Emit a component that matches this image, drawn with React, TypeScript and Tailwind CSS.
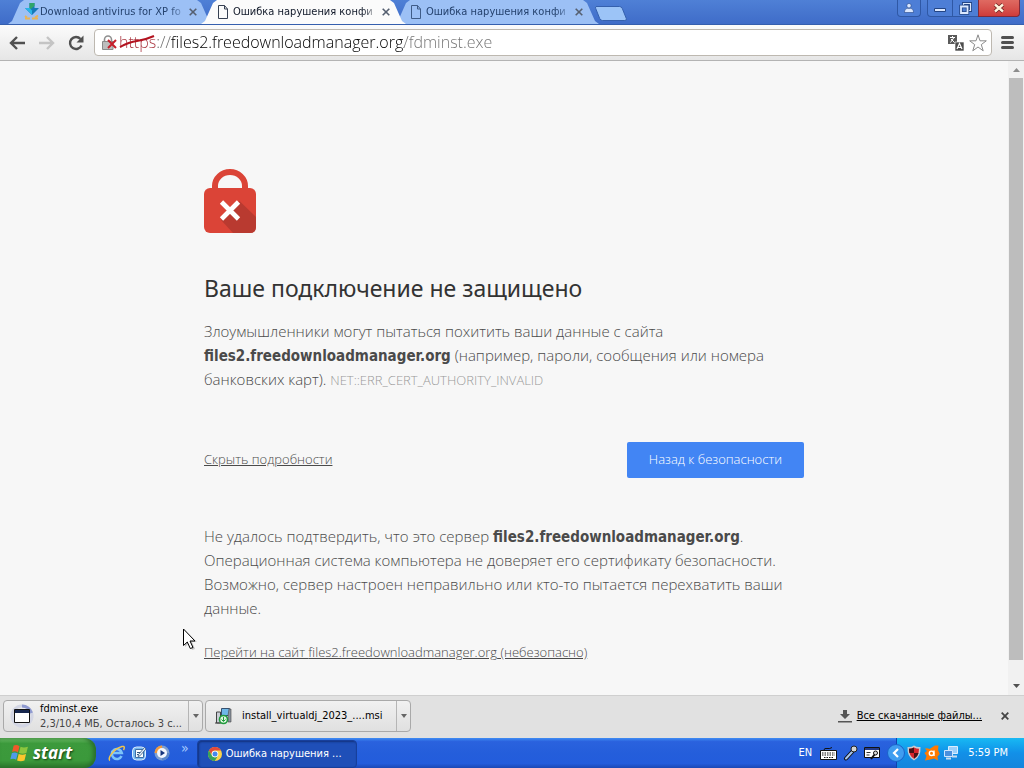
import React, { useState } from "react";
import clsx from "clsx";

const TABS = [
  { id: 1, title: "Download antivirus for XP fo", icon: "download" },
  { id: 2, title: "Ошибка нарушения конфи", icon: "page" },
  { id: 3, title: "Ошибка нарушения конфи", icon: "page" },
];

const HOST = "files2.freedownloadmanager.org";

const PageIcon = () => (
  <svg width="12" height="14" viewBox="0 0 12 14" fill="none" stroke="currentColor">
    <path d="M1.5 .5h6l3 3.5v9.5h-9z" />
    <path d="M7.5 .5v3.5h3" />
  </svg>
);

const DownloadFavicon = () => (
  <svg width="16" height="18" viewBox="0 0 16 18">
    <path d="M5.500 0h5v5H15L8 12 1 5h4.500z" fill="#1579b8" />
    <path d="M5.500 0h5v3l-5 4z" fill="#2fa56a" />
    <path d="M1 5h4.500L8 7.500V12z" fill="#28b4e8" />
    <path d="M1 15.500h5M8 15.500h6M1 13l2 1.500M14 12.500l-3 2" stroke="#e8b458" strokeWidth="1.800" />
  </svg>
);

const Cross = ({ size = 8, width = 1.6 }: { size?: number; width?: number }) => (
  <svg width={size} height={size} viewBox="0 0 8 8" stroke="currentColor" strokeWidth={width}>
    <path d="M.7 .7l6.600 6.600M7.300 .7l-6.600 6.600" />
  </svg>
);

interface TabProps {
  title: string;
  icon: string;
  active: boolean;
  onSelect: () => void;
}

const Tab = ({ title, icon, active, onSelect }: TabProps) => (
  <div
    className={clsx(
      "-ml-3 flex h-6 w-[205px] min-w-0 items-center pr-3.5 pl-4 [clip-path:polygon(0_100%,4px_88%,12px_12%,16px_0,calc(100%-16px)_0,calc(100%-12px)_12%,calc(100%-4px)_88%,100%_100%)]",
      active ? "relative z-10 bg-[#fbfbfb] text-gray-900" : "bg-[#9cc0f5] text-[#25426e]"
    )}
  >
    <button type="button" onClick={onSelect} className="flex min-w-0 flex-1 items-center text-left">
      <span className={clsx("flex w-4 shrink-0", active ? "text-gray-700" : "text-[#3f5c88]")}>
        {icon === "page" ? <PageIcon /> : <DownloadFavicon />}
      </span>
      <span className="flex-1 text-[11px] leading-4 whitespace-nowrap [mask-image:linear-gradient(to_right,#000_88%,transparent)]">
        {title}
      </span>
    </button>
    <button type="button" aria-label="Close tab" className="p-0.5 text-[#555f70]">
      <Cross />
    </button>
  </div>
);

const TitleBar = () => {
  const [active, setActive] = useState(2);

  return (
    <div className="flex h-[25px] items-start border-b border-[#355fae] bg-linear-to-b from-[#4f80d6] to-[#3f6cc8]">
      <div className="flex items-end self-end pl-5">
        {TABS.map((tab) => (
          <Tab
            key={tab.id}
            title={tab.title}
            icon={tab.icon}
            active={tab.id === active}
            onSelect={() => setActive(tab.id)}
          />
        ))}
      </div>
      <button type="button" aria-label="New tab" className="mt-1.5 -ml-1">
        <svg width="32" height="15" viewBox="0 0 32 15">
          <path d="M1 .5h23.500q2 0 2.800 2l4 10q.6 2-1.500 2H7.500q-2 0-2.800-2l-4-10Q.2 .5 1 .5z" fill="#9cc4f7" stroke="#3560ad" />
        </svg>
      </button>
      <div className="ml-auto flex items-start pr-1 text-white">
        <button
          type="button"
          aria-label="User"
          className="mr-1.5 flex h-[17px] w-6 items-center justify-center rounded-b border border-t-0 border-[#2f58a5] bg-[#4d7ed6]"
        >
          <svg width="10" height="10" viewBox="0 0 10 10" fill="#dbe8ff" stroke="#234585" strokeWidth=".6">
            <path d="M5 .5c3.200 0 2.500 4.500 0 4.500S1.800 .5 5 .5zM.5 9.500c0-4 2.500-4.200 4.500-4.200s4.500 .2 4.500 4.200z" />
          </svg>
        </button>
        <button
          type="button"
          aria-label="Minimize"
          className="flex h-[17px] w-[26px] items-center justify-center rounded-bl border border-t-0 border-[#2f58a5] bg-[#4d7ed6]"
        >
          <svg width="12" height="10" viewBox="0 0 12 10">
            <path d="M.5 5.500h11v3H.5z" fill="#dbe8ff" stroke="#234585" />
          </svg>
        </button>
        <button
          type="button"
          aria-label="Restore"
          className="flex h-[17px] w-[25px] items-center justify-center border-b border-[#2f58a5] bg-[#4d7ed6]"
        >
          <svg width="13" height="13" viewBox="0 0 13 13" fill="none">
            <path d="M4.500 3V1.500h7v7H9" stroke="#234585" strokeWidth="3" />
            <path d="M4.500 3V1.500h7v7H9" stroke="#dbe8ff" strokeWidth="1.200" />
            <path d="M2 4.500h6.500V11H2z" stroke="#234585" strokeWidth="3.400" />
            <path d="M2 4.500h6.500V11H2z" stroke="#dbe8ff" strokeWidth="1.800" />
          </svg>
        </button>
        <button
          type="button"
          aria-label="Close"
          className="flex h-[17px] w-[42px] items-center justify-center rounded-br border border-t-0 border-[#7e2a3c] bg-linear-to-b from-[#df6a62] to-[#cf3b3b]"
        >
          <svg width="12" height="10" viewBox="0 0 12 10">
            <path d="M2 1.500l8 7M10 1.500l-8 7" stroke="#6b2020" strokeWidth="4" />
            <path d="M2 1.500l8 7M10 1.500l-8 7" stroke="#fff3dc" strokeWidth="2.400" />
          </svg>
        </button>
      </div>
    </div>
  );
};

const Toolbar = () => (
  <div className="flex h-9 items-center border-b border-[#b3b3b3] bg-linear-to-b from-[#fbfbfb] to-[#e6e6e6] px-2">
    <div className="flex w-[86px] items-center gap-3 text-[#505050]">
      <button type="button" aria-label="Back">
        <svg width="18" height="16" viewBox="0 0 18 16" fill="none" stroke="currentColor" strokeWidth="2.400">
          <path d="M17 8H3M9 2L3 8l6 6" />
        </svg>
      </button>
      <button type="button" aria-label="Forward" disabled className="text-[#c4c4c4]">
        <svg width="18" height="16" viewBox="0 0 18 16" fill="none" stroke="currentColor" strokeWidth="2.400">
          <path d="M1 8h14M9 2l6 6-6 6" />
        </svg>
      </button>
      <button type="button" aria-label="Reload">
        <svg width="16" height="16" viewBox="0 0 16 16" fill="none" stroke="currentColor" strokeWidth="2.400">
          <path d="M13.500 10.500A6 6 0 1 1 12.500 4" />
          <path d="M15.500 .5v7h-7z" fill="currentColor" stroke="none" />
        </svg>
      </button>
    </div>
    <div className="flex h-[27px] min-w-0 flex-1 items-center rounded-sm border border-[#bdb8b0] bg-white pr-1 pl-[7px]">
      <svg width="15" height="16" viewBox="0 0 15 16" fill="none">
        <path d="M2.500 7V4.500a3.500 3.500 0 0 1 7 0V7" stroke="#8f8f8f" strokeWidth="1.600" />
        <path d="M.5 6.500h10.500v8H.5z" fill="#bdbdbd" stroke="#8a8a8a" />
        <path d="M6 5l8 8M14 5l-8 8" stroke="#c61f2b" strokeWidth="2" />
      </svg>
      <div className="relative ml-0.5 min-w-0 flex-1">
        <input
          type="text"
          aria-label="Address"
          defaultValue={`https://${HOST}/fdminst.exe`}
          className="w-full bg-[linear-gradient(to_right,#a8323c_38px,#666_38px,#666_52px,#000_52px,#000_285px,#707070_285px)] bg-clip-text font-[Open_Sans,sans-serif] text-[16px] leading-6 font-light text-transparent outline-none"
        />
        <svg className="pointer-events-none absolute top-1 left-0" width="36" height="16" viewBox="0 0 36 16">
          <path d="M1 13Q10 8 18 7T35 2" stroke="#b3121f" strokeWidth="2" fill="none" />
        </svg>
      </div>
      <button type="button" aria-label="Translate">
        <svg width="18" height="18" viewBox="0 0 18 18">
          <path d="M1 1h9v9H1z" fill="#5a5a5a" />
          <path d="M3 3.500h5M5.500 2v1.500M3.500 8.500l3.500-5M4 5l3.500 3.500" stroke="#fff" fill="none" />
          <path d="M8 8h9v9H8z" fill="#4d4d4d" stroke="#fff" strokeWidth=".6" />
          <path d="M10 15l2.500-5.500L15 15M11 13.500h3" stroke="#fff" fill="none" strokeWidth="1.200" />
        </svg>
      </button>
      <button type="button" aria-label="Bookmark" className="ml-1">
        <svg width="18" height="18" viewBox="0 0 18 18" fill="#fff" stroke="#8a8a8a" strokeLinejoin="round">
          <path d="M9 .8l2 6h6.300l-5 3.800 1.900 6.200L9 13l-5.200 3.800 1.900-6.200-5-3.800H7z" />
        </svg>
      </button>
    </div>
    <button type="button" aria-label="Menu" className="mx-0.5 ml-[9px]">
      <svg width="13" height="13" viewBox="0 0 13 13" stroke="#505050" strokeWidth="3" strokeLinecap="round">
        <path d="M1.500 1.500h10M1.500 6.500h10M1.500 11.500h10" />
      </svg>
    </button>
  </div>
);

const BrokenLock = () => (
  <svg width="52" height="64" viewBox="0 0 52 64">
    <path d="M11 22V17a15 14 0 0 1 30 0v5" fill="none" stroke="#db4437" strokeWidth="6" />
    <rect y="19" width="52" height="45" rx="6" fill="#db4437" />
    <path d="M35.500 32L52 48v10q0 6-6 6H29L17 51z" fill="#b93a30" />
    <path d="M17.500 33l17 17M34.500 33l-17 17" stroke="#fff" strokeWidth="4.600" />
  </svg>
);

const Host = () => (
  <strong className="font-[DejaVu_Sans_Condensed,DejaVu_Sans,sans-serif] leading-4 font-bold">{HOST}</strong>
);

const Warning = () => (
  <main className="relative flex min-h-0 flex-1 bg-[#f7f7f7] font-[Open_Sans,sans-serif] font-light text-[#4a4a4a]">
    <div className="min-w-0 flex-1 px-6">
      <div className="mx-auto max-w-[600px] pt-[108px]">
        <BrokenLock />
        <h1 className="mt-[39px] font-[Noto_Sans,sans-serif] text-[23px] leading-8 font-normal text-[#333]">
          Ваше подключение не защищено
        </h1>
        <p className="mt-[15px] text-[15px] leading-6">
          Злоумышленники могут пытаться похитить ваши данные с сайта <Host /> (например, пароли,
          сообщения или номера банковских карт).{" "}
          <span className="text-[13px] leading-4 text-[#999]">NET::ERR_CERT_AUTHORITY_INVALID</span>
        </p>
        <div className="mt-[51px] flex items-center justify-between">
          <button type="button" className="text-[13px] underline">
            Скрыть подробности
          </button>
          <button type="button" className="h-9 rounded-xs bg-[#4285f4] px-[22px] text-[13px] text-white">
            Назад к безопасности
          </button>
        </div>
        <p className="mt-[46px] text-[15px] leading-6">
          Не удалось подтвердить, что это сервер <Host />. Операционная система компьютера не
          доверяет его сертификату безопасности. Возможно, сервер настроен неправильно или кто-то
          пытается перехватить ваши данные.
        </p>
        <p className="mt-5 text-[13px] leading-6">
          <a href="#proceed" className="underline">
            Перейти на сайт {HOST} (небезопасно)
          </a>
        </p>
      </div>
    </div>
    <div className="flex w-4 flex-col items-center bg-[#f1f1f1] py-[7px]">
      <svg width="7" height="4" viewBox="0 0 7 4" fill="#8c8c8c">
        <path d="M3.500 0L7 4H0z" />
      </svg>
      <div className="mt-1.5 mb-6 w-3.5 flex-1 bg-[#bdbdbd]" />
      <svg width="7" height="4" viewBox="0 0 7 4" fill="#505050">
        <path d="M3.500 4L0 0h7z" />
      </svg>
    </div>
    <svg className="absolute top-[567px] left-[182px]" width="16" height="24" viewBox="0 0 16 24">
      <path d="M3 3v16l4-4 3 7 3-1-3-7h5z" fill="#0003" />
      <path d="M1.500 1v16.500l3.800-3.500 3 6.500 2.700-1-3-6.500h5z" fill="#fff" stroke="#000" />
    </svg>
  </main>
);

const Arrow = () => (
  <svg width="6" height="4" viewBox="0 0 6 4" fill="#666">
    <path d="M3 4L0 0h6z" />
  </svg>
);

const DownloadShelf = () => (
  <div className="flex h-[43px] items-start border-t border-[#cfcfcf] bg-[#e1e1e1] pt-1 pl-[3px] text-[11px] text-black">
    <div className="flex h-8 w-[200px] rounded-sm border border-[#a9a9a9] bg-linear-to-b from-[#f1f1f1] to-[#e0e0e0]">
      <button type="button" className="flex min-w-0 flex-1 items-center pl-1.5 text-left">
        <svg width="24" height="24" viewBox="0 0 24 24" fill="none">
          <circle cx="12" cy="12" r="10" stroke="#d3d6e4" strokeWidth="3" />
          <path d="M12 2a10 10 0 0 1 9.500 7" stroke="#8f9ad0" strokeWidth="3" />
          <path d="M4.500 5.500h15v13h-15z" fill="#fff" stroke="#111" />
          <path d="M5 6h14v3H5z" fill="#16264e" />
        </svg>
        <span className="ml-1.5 flex min-w-0 flex-col leading-[15px] whitespace-nowrap">
          <span>fdminst.exe</span>
          <span className="text-[#444]">2,3/10,4 МБ, Осталось 3 с...</span>
        </span>
      </button>
      <button type="button" aria-label="Options" className="flex w-3.5 items-center justify-center border-l border-[#b5b5b5]">
        <Arrow />
      </button>
    </div>
    <div className="ml-0.5 flex h-8 w-[206px] rounded-sm border border-[#a9a9a9] bg-linear-to-b from-[#f1f1f1] to-[#e0e0e0]">
      <button type="button" className="flex min-w-0 flex-1 items-center pl-2 text-left whitespace-nowrap">
        <svg width="18" height="18" viewBox="0 0 18 18">
          <path d="M7.500 1.500h8v7h-8z" fill="#6fb7e8" stroke="#36506e" />
          <path d="M15 2h2v13h-3V9z" fill="#8a93a0" stroke="#444" strokeWidth=".6" />
          <path d="M2.500 5h4v11h-4zM1 16h6" fill="#c9ced6" stroke="#444" />
          <circle cx="9.500" cy="12.500" r="4" fill="#dff5df" stroke="#1f9b3c" strokeWidth="1.600" />
          <path d="M9.500 10v4M7.500 12.500l2 2 2-2" stroke="#1f9b3c" fill="none" />
        </svg>
        <span className="ml-2.5">install_virtualdj_2023_....msi</span>
      </button>
      <button type="button" aria-label="Options" className="flex w-3.5 items-center justify-center border-l border-[#b5b5b5]">
        <Arrow />
      </button>
    </div>
    <div className="ml-auto flex h-8 items-center pr-[15px]">
      <svg width="14" height="13" viewBox="0 0 14 13" fill="#555">
        <path d="M5 0h4v4h3L7 9 2 4h3zM0 11h14v1.500H0z" />
      </svg>
      <a href="#downloads" className="ml-[5px] underline">
        Все скачанные файлы...
      </a>
      <button type="button" aria-label="Close downloads bar" className="ml-[19px] text-[#444]">
        <Cross width={1.8} />
      </button>
    </div>
  </div>
);

const WindowsFlag = () => (
  <svg width="19" height="18" viewBox="0 0 18 17">
    <path d="M3.500 1.500Q6 0 9 2L7.500 8Q5 6.200 2 7.500z" fill="#f0592a" />
    <path d="M10 2.500q3 1.500 7 0L15.500 8.500q-3.500 1.500-7 0z" fill="#8cc63e" />
    <path d="M1.800 8.500q3-1.300 5.500 .5L5.800 15Q3.500 13.200 .3 14.500z" fill="#4f9be8" />
    <path d="M8.200 9.500q3.500 1.500 7 0l-1.500 6q-3.500 1.500-7 0z" fill="#fbc62d" />
  </svg>
);

const ChromeLogo = () => (
  <svg width="14" height="14" viewBox="0 0 14 14">
    <circle cx="7" cy="7" r="7" fill="#fbd24a" />
    <path d="M.9 3.500A7 7 0 0 1 13.100 3.500H7a3.500 3.500 0 0 0-3.300 4.600z" fill="#e24a3b" />
    <path d="M.9 3.500A7 7 0 0 0 6.800 14l3-5A3.500 3.500 0 0 1 3.900 8.500z" fill="#36a35a" />
    <circle cx="7" cy="7" r="3.300" fill="#fff" />
    <circle cx="7" cy="7" r="2.500" fill="#4587ee" />
  </svg>
);

const QuickLaunch = () => (
  <div className="flex items-center gap-[7px] pl-3">
    <button type="button" aria-label="Internet Explorer">
      <svg width="17" height="17" viewBox="0 0 17 17" fill="none">
        <path d="M13.500 11a5 5 0 1 1 .3-3H5" stroke="#7cc4fa" strokeWidth="2.600" />
        <path d="M2 15.500C-1 14 5 4 14 1.500c3-.8 2.500 2 1.500 3.500" stroke="#f3c64a" strokeWidth="1.400" />
      </svg>
    </button>
    <button type="button" aria-label="Show desktop">
      <svg width="15" height="16" viewBox="0 0 15 16">
        <rect x=".5" y="2" width="13" height="13" rx="4" fill="#78b8ee" stroke="#dcecff" />
        <path d="M3.500 4.500h8v8h-8z" fill="#fff" stroke="#3e6fa8" />
        <path d="M5 7.500h4M5 9.500h2" stroke="#31557f" />
        <path d="M6.500 9.500l6-7 1.500 1.300-6 7-2 .7z" fill="#e8f1fb" stroke="#31557f" strokeWidth=".8" />
      </svg>
    </button>
    <button type="button" aria-label="Media Player">
      <svg width="16" height="16" viewBox="0 0 16 16">
        <circle cx="8" cy="8" r="7.500" fill="#7f9fd0" />
        <path d="M8 .5A7.500 7.500 0 0 0 .5 8H8z" fill="#f19a3e" />
        <path d="M8 15.500A7.500 7.500 0 0 0 15.500 8H8z" fill="#5a86c9" />
        <circle cx="8" cy="8" r="5" fill="#f3f7ff" />
        <path d="M6.500 5l4.500 3-4.500 3z" fill="#16357d" />
      </svg>
    </button>
    <span className="ml-1 self-start pt-1 text-[14px] leading-3 text-[#a8cbff]">»</span>
  </div>
);

const Tray = () => (
  <div className="ml-auto flex items-stretch">
    <div className="flex items-center gap-1.5 pr-4">
      <span className="mr-0.5 text-[11px]">EN</span>
      <svg width="17" height="13" viewBox="0 0 17 13">
        <path d="M4 3q0-2 3-1.500t5-1" stroke="#111" fill="none" />
        <path d="M.5 3.500h16v9H.5z" fill="#fff" stroke="#111" />
        <path d="M2 6h13M2 8h13M4 10.500h9" stroke="#111" strokeDasharray="1.500 1" />
      </svg>
      <svg width="15" height="16" viewBox="0 0 15 16">
        <path d="M3 13.500L9 7" stroke="#111" strokeWidth="4" strokeLinecap="round" />
        <path d="M3 13.500L9 7" stroke="#a9c6ec" strokeWidth="2" strokeLinecap="round" />
        <circle cx="11" cy="4" r="3" fill="#d4d4d4" stroke="#222" />
      </svg>
      <svg width="16" height="15" viewBox="0 0 16 15">
        <path d="M.5 1.500h15v10H.5z" fill="#fff" stroke="#111" />
        <path d="M1 2h14v2H1z" fill="#223a8a" />
        <path d="M2.500 6.500h4M2.500 9h3" stroke="#333" />
        <path d="M7 13l4-5" stroke="#111" strokeWidth="2" />
        <circle cx="11.500" cy="7" r="2" fill="#ddd" stroke="#111" />
      </svg>
    </div>
    <div className="relative flex items-center gap-[3px] border-l border-[#1042af] bg-linear-to-b from-[#19b9f3] via-[#1290e8] to-[#1585dc] pr-4 pl-2.5">
      <button type="button" aria-label="Show hidden icons" className="absolute top-1.5 -left-2.5">
        <svg width="18" height="18" viewBox="0 0 18 18">
          <circle cx="9" cy="9" r="8.500" fill="#3f9df0" stroke="#1b62c9" />
          <path d="M11 5L7 9l4 4" stroke="#fff" strokeWidth="2.200" fill="none" />
        </svg>
      </button>
      <svg width="14" height="16" viewBox="0 0 14 16">
        <path d="M7 .5q3 2 6.500 1.500Q14 12 7 15.500 0 12 .5 2 4 2.500 7 .5z" fill="#c9ccd2" />
        <path d="M7 2.500q2.500 1.200 5 1.200Q12 11 7 13.800 2 11 2 3.700q2.500 0 5-1.200z" fill="#d9252c" />
        <path d="M7 8h4.600q-1 4-4.600 5.800zM7 2.500V8H2.400Q2 6 2 3.700q2.500 0 5-1.200z" fill="#4a1216" />
      </svg>
      <svg width="16" height="16" viewBox="0 0 16 16">
        <path d="M1 3.500Q4 3 5.500 4L11 .5 14.500 .5 14 5l1.800 4-2.300 2.500.5 4-4-2-3.500 1L1 15.500l1.500-4.500L.5 8 3 6z" fill="#ff7a00" />
        <circle cx="7.500" cy="8.300" r="2.200" fill="none" stroke="#fff" strokeWidth="1.400" />
        <path d="M10 5.500v5.500" stroke="#fff" strokeWidth="1.400" />
      </svg>
      <svg width="16" height="16" viewBox="0 0 16 16">
        <path d="M5.500 1.500h9v7h-9z" fill="#9cd0fb" stroke="#dbeeff" />
        <path d="M1.500 5.500h8v6h-8z" fill="#4a8fdd" stroke="#cfe6ff" />
        <path d="M3 13.500h5M9 11.500h5" stroke="#c9dcf0" strokeWidth="2" />
      </svg>
      <span className="ml-1.5 text-[11px] whitespace-nowrap">5:59 PM</span>
    </div>
  </div>
);

const Taskbar = () => (
  <footer className="flex h-[30px] items-stretch bg-[linear-gradient(to_bottom,#3f8cf3_0,#2a62de_12%,#245edb_50%,#235cdc_85%,#1b48b5)] text-white">
    <button
      type="button"
      className="flex w-24 items-center gap-1 rounded-r-xl bg-[linear-gradient(to_bottom,#6ec06a_0,#3c9a3c_18%,#3b993b_75%,#2c772c)] pl-2.5 font-[Open_Sans,sans-serif] text-[17px] font-bold italic shadow-[inset_-3px_0_4px_#2a6e2a] [text-shadow:1px_1px_2px_#123d12]"
    >
      <WindowsFlag />
      start
    </button>
    <QuickLaunch />
    <button
      type="button"
      className="mt-0.5 ml-2 flex w-40 items-center gap-1 rounded-sm border border-[#173f9b] bg-[#1f4fb8] pl-2.5 text-[11px] shadow-[inset_1px_1px_2px_#12327d]"
    >
      <ChromeLogo />
      Ошибка нарушения ...
    </button>
    <Tray />
  </footer>
);

export default function App() {
  return (
    <div className="flex h-screen min-w-0 flex-col overflow-hidden font-[DejaVu_Sans_Condensed,DejaVu_Sans,sans-serif]">
      <TitleBar />
      <Toolbar />
      <Warning />
      <DownloadShelf />
      <Taskbar />
    </div>
  );
}
